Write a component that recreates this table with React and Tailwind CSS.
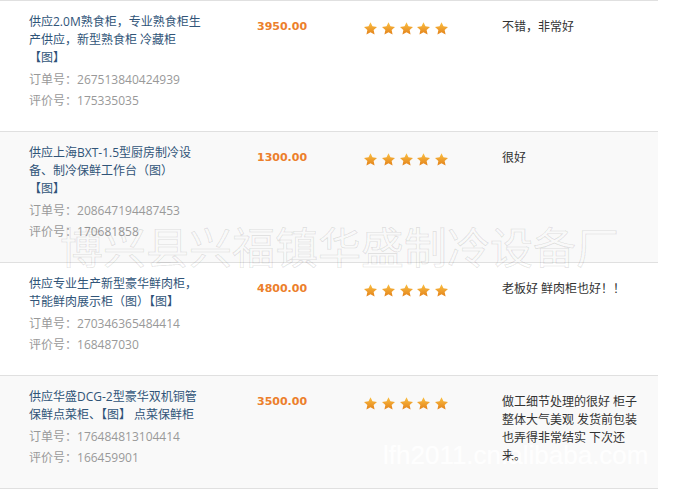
const reviews = [
  {
    title: ["供应2.0M熟食柜，专业熟食柜生", "产供应，新型熟食柜 冷藏柜", "【图】"],
    order: "267513840424939",
    review: "175335035",
    price: "3950.00",
    comment: ["不错，非常好"],
  },
  {
    title: ["供应上海BXT-1.5型厨房制冷设", "备、制冷保鲜工作台（图）", "【图】"],
    order: "208647194487453",
    review: "170681858",
    price: "1300.00",
    comment: ["很好"],
  },
  {
    title: ["供应专业生产新型豪华鲜肉柜，", "节能鲜肉展示柜（图）【图】"],
    order: "270346365484414",
    review: "168487030",
    price: "4800.00",
    comment: ["老板好 鲜肉柜也好！！"],
  },
  {
    title: ["供应华盛DCG-2型豪华双机铜管", "保鲜点菜柜、【图】 点菜保鲜柜"],
    order: "176484813104414",
    review: "166459901",
    price: "3500.00",
    comment: [
      "做工细节处理的很好 柜子",
      "整体大气美观 发货前包装",
      "也弄得非常结实 下次还",
      "来。",
    ],
  },
];

function Star({ id }) {
  return (
    <svg viewBox="0 0 24 23" className="w-[13px] h-[13px]">
      <defs>
        <linearGradient id={id} x1="0" y1="0" x2="0" y2="1">
          <stop offset="0" stopColor="#fbc043" />
          <stop offset="1" stopColor="#e3821a" />
        </linearGradient>
      </defs>
      <path
        d="M12 0l3.6 7.5 8.4 1-6.2 5.7 1.7 8.3L12 18.3 4.5 22.5l1.7-8.3L0 8.5l8.4-1z"
        fill={`url(#${id})`}
      />
    </svg>
  );
}

const App = () => {
  return (
    <div
      className="relative w-[678px] h-[491px] bg-white overflow-hidden text-[12px]"
      style={{ fontFamily: '"Open Sans", "Noto Sans CJK SC", sans-serif' }}
    >
      <div className="w-[658px] border-b border-[#e0e0e0]">
        {reviews.map((r, i) => (
          <div
            key={r.order}
            className={`grid grid-cols-[257px_106px_139px_156px] border-t border-[#e0e0e0] pt-[12px] pb-[20px] ${
              i % 2 === 1 ? "bg-[#f9f9f9]" : "bg-white"
            }`}
          >
            <div className="pl-[29px]">
              <div className="text-[#305478] leading-[18px]">
                {r.title.map((line) => (
                  <div key={line} className="whitespace-nowrap">
                    {line}
                  </div>
                ))}
              </div>
              <div className="mt-[2px] text-[#999] leading-[21px]">
                <div>订单号：{r.order}</div>
                <div>评价号：{r.review}</div>
              </div>
            </div>
            <div
              className="mt-[5px] leading-[18px] text-[11px] font-bold text-[#ec7f2c]"
              style={{ fontFamily: '"DejaVu Sans", sans-serif' }}
            >
              {r.price}
            </div>
            <div className="mt-[9px] flex gap-[4.8px] h-[13px] pl-[1px]">
              {[0, 1, 2, 3, 4].map((s) => (
                <Star key={s} id={`star-${i}-${s}`} />
              ))}
            </div>
            <div className="mt-[5px] text-[#333] leading-[18px]">
              {r.comment.map((line) => (
                <div key={line} className="whitespace-nowrap">
                  {line}
                </div>
              ))}
            </div>
          </div>
        ))}
      </div>

      {/* watermarks */}
      <div
        className="absolute left-[60px] top-[224px] text-[43px] leading-none whitespace-nowrap text-black/[0.02] [-webkit-text-stroke:1px_rgba(0,0,0,0.1)] pointer-events-none"
        style={{ fontFamily: '"Noto Sans CJK SC", sans-serif' }}
      >
        博兴县兴福镇华盛制冷设备厂
      </div>
      <div
        className="absolute left-[383px] top-[442px] text-[26px] leading-none whitespace-nowrap text-white/90 pointer-events-none"
        style={{ fontFamily: '"Liberation Sans", sans-serif' }}
      >
        lfh2011.cn.alibaba.com
      </div>
    </div>
  );
};

export default App;
